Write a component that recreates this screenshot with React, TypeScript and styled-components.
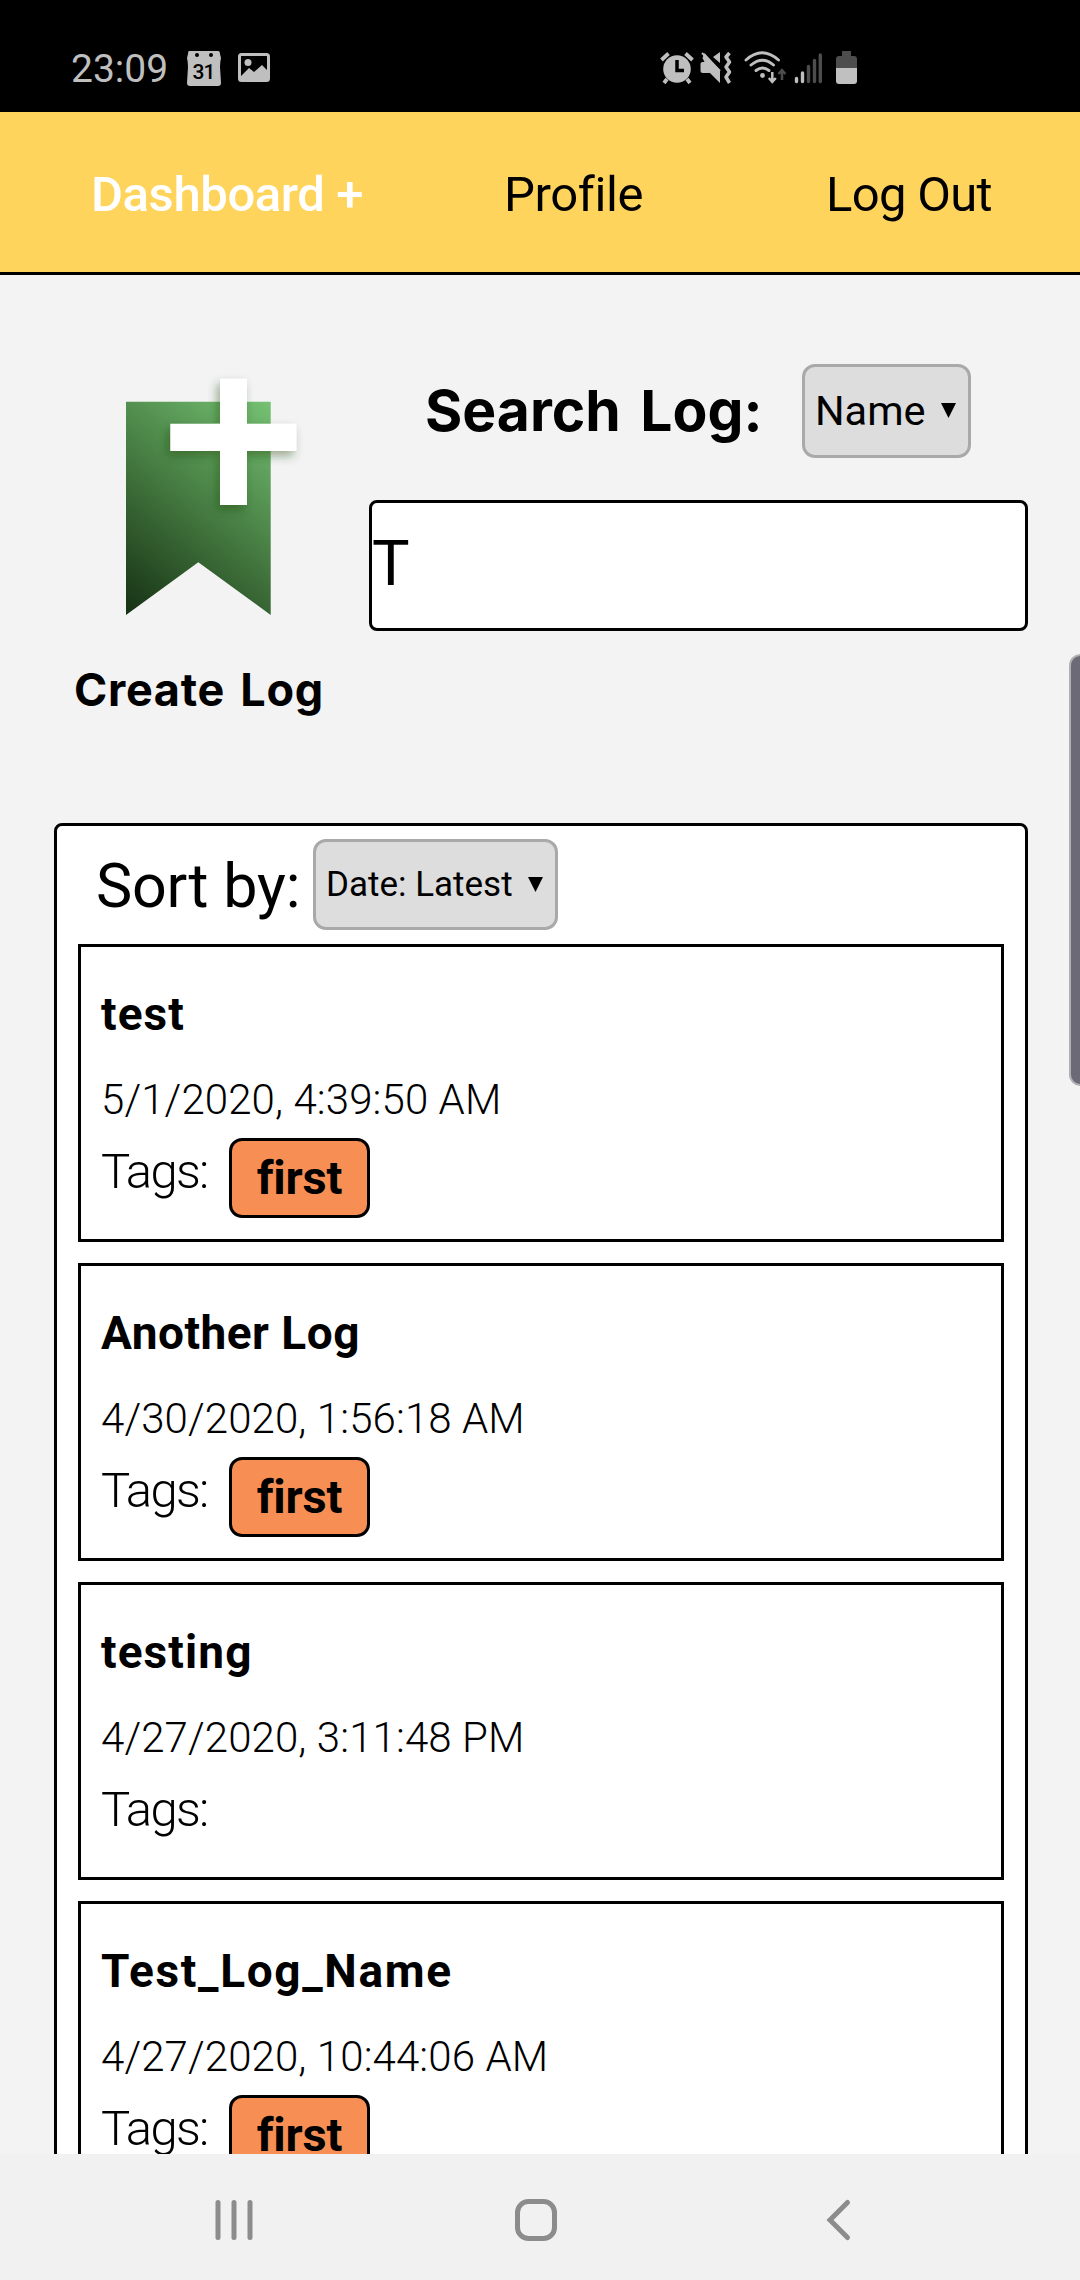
import React from "react";
import styled, { createGlobalStyle } from "styled-components";

const GlobalStyle = createGlobalStyle`
  * { box-sizing: border-box; }
  html, body { margin: 0; padding: 0; }
  body {
    background: #f3f3f3;
    color: #000;
    font-family: Roboto, "Liberation Sans", sans-serif;
    overflow: hidden;
  }
`;

const Screen = styled.div`
  position: relative;
  display: flex;
  flex-direction: column;
  width: 1080px;
  height: 2280px;
  overflow: hidden;
  background: #f3f3f3;
`;

const StatusBar = styled.header`
  flex: none;
  display: flex;
  align-items: flex-start;
  height: 112px;
  padding: 46px 0 0 71px;
  background: #000;
  color: #bfbfbf;
`;

const Clock = styled.span`
  width: 115px;
  font-size: 39px;
  line-height: 47px;
`;

const StatusIcon = styled.svg<{ $gap?: number }>`
  flex: none;
  display: block;
  height: 40px;
  margin-left: ${(p) => p.$gap ?? 0}px;
`;

const NavBar = styled.nav`
  flex: none;
  display: grid;
  grid-template-columns: 413px 322px 1fr;
  height: 163px;
  padding: 5px 0 0 91px;
  background: #ffd45c;
  border-bottom: 3px solid #000;
`;

const NavLink = styled.a<{ $active?: boolean; $spacing: number }>`
  color: ${(p) => (p.$active ? "#fff" : "#000")};
  font-size: 49px;
  font-weight: ${(p) => (p.$active ? 500 : 400)};
  line-height: 155px;
  letter-spacing: ${(p) => p.$spacing}px;
  white-space: nowrap;
`;

const Content = styled.main`
  flex: 1;
  min-height: 0;
  overflow: hidden;
  padding: 89px 52px 0 54px;
`;

const Tools = styled.section`
  display: flex;
  height: 459px;
`;

const CreateLog = styled.button`
  display: flex;
  flex-direction: column;
  width: 315px;
  padding: 0;
  border: 0;
  background: none;
  text-align: left;
`;

const Bookmark = styled.svg`
  display: block;
  width: 280px;
  height: 266px;
  overflow: visible;
`;

const CreateLabel = styled.span`
  padding-left: 20px;
  margin-top: 30px;
  font: 700 45px/60px Inter, sans-serif;
  letter-spacing: 0.7px;
  word-spacing: 4px;
  color: #000;
  white-space: nowrap;
`;

const SearchArea = styled.div`
  flex: 1;
`;

const SearchHead = styled.div`
  display: flex;
  align-items: center;
  height: 94px;
  margin-bottom: 42px;
`;

const SearchTitle = styled.h2`
  width: 433px;
  margin: 0;
  padding-left: 56px;
  font: 700 57px/96px Inter, sans-serif;
  letter-spacing: 0;
  word-spacing: 6px;
  white-space: nowrap;
`;

const SelectBox = styled.div<{ $w: number; $h: number; $size: number }>`
  flex: none;
  display: flex;
  align-items: center;
  justify-content: space-between;
  width: ${(p) => p.$w}px;
  height: ${(p) => p.$h}px;
  padding: 0 12px 1px 10px;
  border: 3px solid #a9a9a9;
  border-radius: 13px;
  background: #ddd;
  font-size: ${(p) => p.$size}px;
  white-space: nowrap;
`;

const Caret = styled.svg`
  display: block;
  width: 15px;
  height: 15px;
`;

const SearchInput = styled.input`
  display: block;
  width: 659px;
  height: 131px;
  margin: 0;
  padding: 0 0 4px 0;
  border: 3px solid #000;
  border-radius: 8px;
  background: #fff;
  color: #000;
  outline: none;
  font: 400 63px/1 Roboto, sans-serif;
`;

const Panel = styled.section`
  width: 974px;
  height: 1500px;
  padding: 13px 21px;
  border: 3px solid #000;
  border-radius: 8px;
  background: #fff;
`;

const SortRow = styled.div`
  display: flex;
  height: 105px;
`;

const SortLabel = styled.span`
  width: 235px;
  padding-left: 18px;
  font-size: 61px;
  line-height: 95px;
  letter-spacing: -0.2px;
  white-space: nowrap;
`;

const LogList = styled.div`
  display: flex;
  flex-direction: column;
  gap: 21px;
`;

const LogCard = styled.article`
  height: 298px;
  padding: 32px 20px 0;
  border: 3px solid #000;
  background: #fff;
`;

const LogName = styled.h3<{ $spacing: number }>`
  margin: 0;
  font-size: 46px;
  font-weight: 700;
  line-height: 70px;
  letter-spacing: ${(p) => p.$spacing}px;
  white-space: nowrap;
`;

const LogDate = styled.p`
  margin: 0;
  padding-top: 15px;
  font-size: 42px;
  font-weight: 350;
  line-height: 72px;
  letter-spacing: 0.1px;
  white-space: nowrap;
`;

const TagRow = styled.div`
  display: flex;
  margin-top: 2px;
`;

const TagLabel = styled.span`
  width: 128px;
  font-size: 49px;
  font-weight: 350;
  line-height: 68px;
  letter-spacing: -1.7px;
`;

const Tag = styled.span`
  width: 141px;
  height: 80px;
  border: 3px solid #000;
  border-radius: 13px;
  background: #f78f55;
  font-size: 47px;
  font-weight: 700;
  line-height: 74px;
  letter-spacing: -0.2px;
  text-align: center;
`;

const ScrollThumb = styled.div`
  position: absolute;
  top: 654px;
  right: -12px;
  width: 23px;
  height: 432px;
  border: 2px solid #b0b0b2;
  border-radius: 12px;
  background: #6d6a78;
`;

const SystemNav = styled.footer`
  flex: none;
  display: flex;
  height: 126px;
  padding: 40px 0 0 209px;
  gap: 253px;
  background: #f1f1f1;
`;

const SystemIcon = styled.svg`
  display: block;
  width: 50px;
  height: 52px;
  fill: none;
  stroke: #8c8c8c;
  stroke-width: 5;
  stroke-linecap: round;
`;

type Log = { name: string; date: string; tags: string[]; spacing: number };

const logs: Log[] = [
  { name: "test", date: "5/1/2020, 4:39:50 AM", tags: ["first"], spacing: 1.1 },
  { name: "Another Log", date: "4/30/2020, 1:56:18 AM", tags: ["first"], spacing: 0.5 },
  { name: "testing", date: "4/27/2020, 3:11:48 PM", tags: [], spacing: 1.1 },
  { name: "Test_Log_Name", date: "4/27/2020, 10:44:06 AM", tags: ["first"], spacing: 1.65 },
];

function Select({ label, w, h, size }: { label: string; w: number; h: number; size: number }) {
  return (
    <SelectBox $w={w} $h={h} $size={size}>
      <span>{label}</span>
      <Caret viewBox="0 0 15 15"><path d="M0 0h15L7.5 15z" /></Caret>
    </SelectBox>
  );
}

export default function App() {
  return (
    <>
      <GlobalStyle />
      <Screen>
        <StatusBar>
          <Clock>23:09</Clock>
          <StatusIcon width="36" viewBox="186 46 36 40">
            <path d="M189 51h29q2 0 2 3l1 4q-1 4-1 9l1 16q0 3-3 3h-28q-3 0-3-3l1-16q0-5-1-9l1-4q0-3 1-3z" fill="#bfbfbf" />
            <circle cx="197" cy="55" r="2" /><circle cx="211" cy="55" r="2" />
            <text x="203.5" y="78.5" fontSize="21" fontWeight="500" textAnchor="middle" letterSpacing="-1">31</text>
          </StatusIcon>
          <StatusIcon width="34" viewBox="237 46 34 40" $gap={15}>
            <rect x="239.5" y="54.500" width="29" height="26" rx="2" fill="none" stroke="#bfbfbf" strokeWidth="3" />
            <circle cx="248" cy="62.500" r="3.500" fill="#bfbfbf" />
            <path d="M240 77l9-9 5 4 8-7 7 7v9h-29z" fill="#bfbfbf" />
          </StatusIcon>
          <StatusIcon width="36" viewBox="659 46 36 40" $gap={388}>
            <circle cx="677" cy="69" r="13.800" fill="#bfbfbf" />
            <path d="M661.500 60l7-6.500M685.500 53.500l7 6.500M667 79l-3 4M687 79l3 4" stroke="#bfbfbf" strokeWidth="3.800" />
            <path d="M677 60v10.500h7" fill="none" stroke="#000" strokeWidth="3.500" />
          </StatusIcon>
          <StatusIcon width="34" viewBox="699 46 34 40" $gap={4}>
            <path d="M700.500 64q0-2 2-2h2l-2-4 2-5 15.500 17v13l-10-10h-7q-2.500 0-2.500-2.500zM713 57l7-5v11z" fill="#bfbfbf" />
            <path d="M702 53l18 18" stroke="#bfbfbf" strokeWidth="2" />
            <path d="M729.500 53l-3.500 4 3.500 5-3.500 5 3.500 5-3.500 5 3.500 6" fill="none" stroke="#bfbfbf" strokeWidth="3.500" strokeLinejoin="round" />
          </StatusIcon>
          <StatusIcon width="44" viewBox="743 46 44 40" $gap={10}>
            <g fill="none" stroke="#bfbfbf" strokeWidth="2.900" strokeLinecap="round">
              <path d="M746 60q16-14.500 32.500 0M751 65q11.500-9.500 22.500 0M756 70.500q6.500-5 13 0" />
            </g>
            <circle cx="762.500" cy="75.500" r="2.400" fill="#bfbfbf" />
            <path d="M772.300 72v9M768.800 78l3.500 3.800 3.500-3.800" fill="none" stroke="#bfbfbf" strokeWidth="2.500" />
            <path d="M782 80v-9M778.500 74l3.500-3.800 3.500 3.800" fill="none" stroke="#4d4d4d" strokeWidth="2.500" />
          </StatusIcon>
          <StatusIcon width="30" viewBox="793 46 30 40" $gap={6}>
            <g strokeWidth="3.400" strokeLinecap="round">
              <path d="M796.500 78.500v3M802.500 73v8.500" stroke="#bfbfbf" />
              <path d="M808.500 66.500v15M814.500 60.500v21M820.300 55v26.500" stroke="#4d4d4d" />
            </g>
          </StatusIcon>
          <StatusIcon width="24" viewBox="834 46 24 40" $gap={11}>
            <path d="M842 51h9v5h3q3 0 3 3v9h-21v-9q0-3 3-3h3z" fill="#4d4d4d" />
            <path d="M836 68h21v13q0 3-3 3h-15q-3 0-3-3z" fill="#c0c0c0" />
          </StatusIcon>
        </StatusBar>

        <NavBar>
          <NavLink $active $spacing={-0.4}>Dashboard +</NavLink>
          <NavLink $spacing={-0.4}>Profile</NavLink>
          <NavLink $spacing={-0.7}>Log Out</NavLink>
        </NavBar>

        <Content>
          <Tools>
            <CreateLog>
              <Bookmark viewBox="54 364 280 266">
                <defs>
                  <linearGradient id="ribbon" gradientUnits="userSpaceOnUse" x1="280" y1="408" x2="122" y2="606">
                    <stop offset="0" stopColor="#76c274" />
                    <stop offset="0.42" stopColor="#4d8749" />
                    <stop offset="0.72" stopColor="#315b2d" />
                    <stop offset="1" stopColor="#173416" />
                  </linearGradient>
                  <filter id="plusShadow" x="-30%" y="-30%" width="160%" height="160%">
                    <feDropShadow dx="-3" dy="5" stdDeviation="5" floodColor="#123c10" floodOpacity="0.4" />
                  </filter>
                </defs>
                <path d="M126 401.700h144.700v213.300l-72.400-52.700L126 615z" fill="url(#ribbon)" />
                <path d="M220 378.700h27v45h49.500V451H247v54h-27v-54h-49.700v-27.300H220z" fill="#fff" filter="url(#plusShadow)" />
              </Bookmark>
              <CreateLabel>Create Log</CreateLabel>
            </CreateLog>
            <SearchArea>
              <SearchHead>
                <SearchTitle>Search Log:</SearchTitle>
                <Select label="Name" w={169} h={94} size={41.5} />
              </SearchHead>
              <SearchInput defaultValue="T" />
            </SearchArea>
          </Tools>

          <Panel>
            <SortRow>
              <SortLabel>Sort by:</SortLabel>
              <Select label="Date: Latest" w={245} h={91} size={35} />
            </SortRow>
            <LogList>
              {logs.map((log) => (
                <LogCard key={log.name}>
                  <LogName $spacing={log.spacing}>{log.name}</LogName>
                  <LogDate>{log.date}</LogDate>
                  <TagRow>
                    <TagLabel>Tags:</TagLabel>
                    {log.tags.map((tag) => <Tag key={tag}>{tag}</Tag>)}
                  </TagRow>
                </LogCard>
              ))}
            </LogList>
          </Panel>
        </Content>

        <SystemNav>
          <SystemIcon viewBox="209 2194 50 52"><path d="M218 2202.500v35M234 2202.500v35M250 2202.500v35" /></SystemIcon>
          <SystemIcon viewBox="512 2194 50 52"><rect x="517.500" y="2201.500" width="37" height="37" rx="11" /></SystemIcon>
          <SystemIcon viewBox="815 2194 50 52"><path d="M847.500 2202.500L830 2220l17.500 17.500" /></SystemIcon>
        </SystemNav>
        <ScrollThumb />
      </Screen>
    </>
  );
}
